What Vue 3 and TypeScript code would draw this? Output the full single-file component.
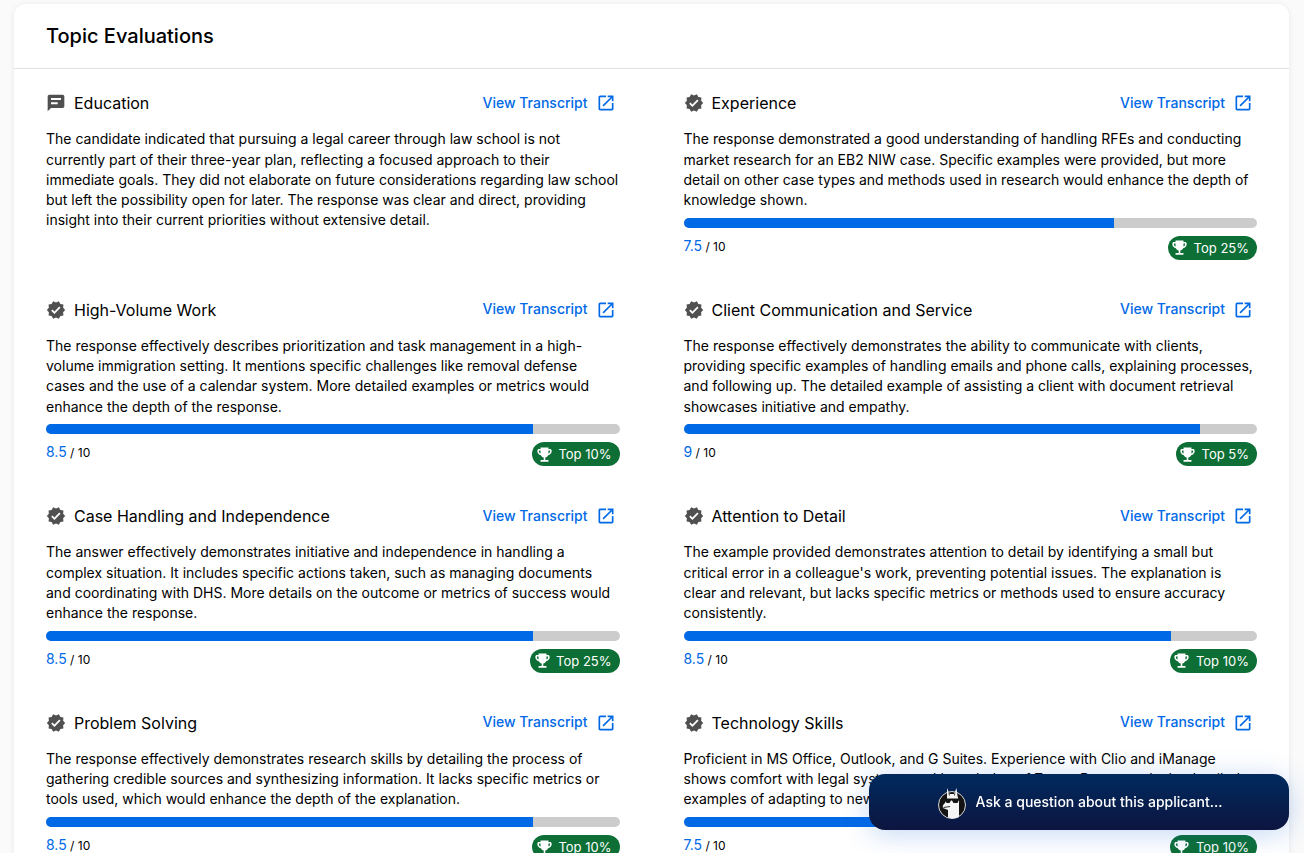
<template>
  <div class="page">
    <section class="panel">
      <h2 class="panel-title">Topic Evaluations</h2>
      <div class="topics">
        <article v-for="topic in topics" :key="topic.name" class="topic">
          <header class="topic-head">
            <svg class="topic-icon" viewBox="0 0 24 24" aria-hidden="true">
              <path :d="topic.score === null ? chatPath : verifiedPath" />
            </svg>
            <h3 class="topic-name">{{ topic.name }}</h3>
            <a class="transcript" href="#">
              <span class="transcript-label">View Transcript</span>
              <svg viewBox="0 0 24 24" aria-hidden="true"><path :d="openPath" /></svg>
            </a>
          </header>
          <p class="summary">{{ topic.text }}</p>
          <template v-if="topic.score !== null">
            <div class="bar">
              <div class="bar-fill" :style="{ width: topic.fill + '%' }"></div>
            </div>
            <div class="score-row">
              <span class="score"><b>{{ topic.score }}</b> / 10</span>
              <span class="rank">
                <svg viewBox="0 0 24 24" aria-hidden="true"><path :d="trophyPath" /></svg>
                {{ topic.rank }}
              </span>
            </div>
          </template>
        </article>
      </div>
    </section>

    <!-- floating assistant bar -->
    <button class="ask" type="button">
      <svg class="llama" viewBox="0 0 28 32" aria-hidden="true">
        <circle cx="14" cy="18" r="13.500" fill="#141414" stroke="#d8d8d8" stroke-width="1" />
        <path
          fill="#f4f4f4"
          d="M9 1l2.500 6H16l2.500-6 1 8 1.500 5v16q-5 2.500-11 .5V23l-5-2q-1-3 2-5l2-4z"
        />
        <path fill="#141414" d="M10.200 4.500l1.800 4h-1zM17.300 4.500l-1.300 4h1z" />
        <path fill="#141414" d="M7 11.500h14V13l-1.500 3h-4L14 13.500h-1L11.500 16H8.500z" />
        <path fill="none" stroke="#141414" stroke-width="0.9" d="M5.500 20.500l6.500-1" />
      </svg>
      Ask a question about this applicant...
    </button>
  </div>
</template>

<script setup lang="ts">
interface Topic {
  name: string
  text: string
  score: number | null
  fill?: number
  rank?: string
}

const chatPath =
  'M20 2H4c-1.100 0-1.990.9-1.990 2L2 22l4-4h14c1.100 0 2-.9 2-2V4c0-1.100-.9-2-2-2zM6 6h12v2.500H6V6zm0 5h8v2.500H6V11z'
const verifiedPath =
  'M23 12l-2.440-2.790.34-3.690-3.610-.82-1.890-3.200L12 2.960 8.600 1.500 6.710 4.690 3.100 5.500l.34 3.700L1 12l2.440 2.790-.34 3.700 3.610.82L8.600 22.500l3.400-1.470 3.400 1.460 1.890-3.190 3.610-.82-.34-3.690L23 12zm-12.910 4.720l-3.800-3.810 1.480-1.480 2.320 2.330 5.850-5.870 1.480 1.480-7.330 7.350z'
const openPath =
  'M19 19H5V5h7V3H5c-1.110 0-2 .9-2 2v14c0 1.100.89 2 2 2h14c1.100 0 2-.9 2-2v-7h-2v7zM14 3v2h3.590l-9.830 9.830 1.410 1.410L19 6.410V10h2V3h-7z'
const trophyPath =
  'M19 5h-2V3H7v2H5c-1.100 0-2 .9-2 2v1c0 2.550 1.920 4.630 4.390 4.940.63 1.500 1.980 2.630 3.610 2.960V19H7v2h10v-2h-4v-3.100c1.630-.33 2.980-1.460 3.610-2.960C19.080 12.630 21 10.550 21 8V7c0-1.100-.9-2-2-2zM5 8V7h2v3.820C5.840 10.400 5 9.300 5 8zm14 0c0 1.300-.84 2.400-2 2.820V7h2v1z'

const topics: Topic[] = [
  {
    name: 'Education',
    text: 'The candidate indicated that pursuing a legal career through law school is not currently part of their three-year plan, reflecting a focused approach to their immediate goals. They did not elaborate on future considerations regarding law school but left the possibility open for later. The response was clear and direct, providing insight into their current priorities without extensive detail.',
    score: null,
  },
  {
    name: 'Experience',
    text: 'The response demonstrated a good understanding of handling RFEs and conducting market research for an EB2 NIW case. Specific examples were provided, but more detail on other case types and methods used in research would enhance the depth of knowledge shown.',
    score: 7.5,
    fill: 75,
    rank: 'Top 25%',
  },
  {
    name: 'High-Volume Work',
    text: 'The response effectively describes prioritization and task management in a high-volume immigration setting. It mentions specific challenges like removal defense cases and the use of a calendar system. More detailed examples or metrics would enhance the depth of the response.',
    score: 8.5,
    fill: 85,
    rank: 'Top 10%',
  },
  {
    name: 'Client Communication and Service',
    text: 'The response effectively demonstrates the ability to communicate with clients, providing specific examples of handling emails and phone calls, explaining processes, and following up. The detailed example of assisting a client with document retrieval showcases initiative and empathy.',
    score: 9,
    fill: 90,
    rank: 'Top 5%',
  },
  {
    name: 'Case Handling and Independence',
    text: 'The answer effectively demonstrates initiative and independence in handling a complex situation. It includes specific actions taken, such as managing documents and coordinating with DHS. More details on the outcome or metrics of success would enhance the response.',
    score: 8.5,
    fill: 85,
    rank: 'Top 25%',
  },
  {
    name: 'Attention to Detail',
    text: "The example provided demonstrates attention to detail by identifying a small but critical error in a colleague's work, preventing potential issues. The explanation is clear and relevant, but lacks specific metrics or methods used to ensure accuracy consistently.",
    score: 8.5,
    fill: 85,
    rank: 'Top 10%',
  },
  {
    name: 'Problem Solving',
    text: 'The response effectively demonstrates research skills by detailing the process of gathering credible sources and synthesizing information. It lacks specific metrics or tools used, which would enhance the depth of the explanation.',
    score: 8.5,
    fill: 85,
    rank: 'Top 10%',
  },
  {
    name: 'Technology Skills',
    text: 'Proficient in MS Office, Outlook, and G Suites. Experience with Clio and iManage shows comfort with legal systems and knowledge of Zoom. Response lacks detailed examples of adapting to new tools or troubleshooting.',
    score: 7.5,
    fill: 75,
    rank: 'Top 10%',
  },
]
</script>

<style>
html,
body {
  margin: 0;
  height: 100%;
  overflow: hidden;
  background: #fafafa;
}
</style>

<style scoped>
.page {
  height: 853px;
  overflow: hidden;
  box-sizing: border-box;
  padding: 4px 15px 0 14px;
  font-family: Inter, "Liberation Sans", sans-serif;
  color: #000;
}

.panel {
  background: #fff;
  border-radius: 12px;
  box-shadow: 0 1px 6px rgba(0, 0, 0, 0.08);
}

.panel-title {
  margin: 0;
  padding: 18px 32px;
  border-bottom: 1px solid #e0e0e0;
  font-size: 20px;
  line-height: 28px;
  font-weight: 500;
}

.topics {
  display: grid;
  grid-template-columns: 1fr 1fr;
  grid-auto-rows: 206.5px;
  column-gap: 64px;
  padding: 22.300px 32px 0;
}

.topic-head {
  display: flex;
  align-items: center;
  height: 24px;
  margin-bottom: 14px;
}

.topic-icon {
  width: 20px;
  height: 20px;
  fill: #505050;
  fill-rule: evenodd;
  margin-right: 8px;
}

.topic-name {
  margin: 0;
  font-size: 16px;
  font-weight: 400;
  line-height: 24px;
}

.transcript {
  display: flex;
  align-items: center;
  gap: 8px;
  margin-left: auto;
  margin-right: 4px;
  color: #0069e6;
  font-size: 14px;
  font-weight: 500;
  text-decoration: none;
}

.transcript-label {
  margin-bottom: 2px;
}

.transcript svg {
  width: 20px;
  height: 20px;
  fill: #0069e6;
}

.summary {
  margin: 0;
  font-size: 14px;
  line-height: 20.25px;
}

.bar {
  height: 10px;
  margin-top: 7.600px;
  border-radius: 5px;
  background: #cccccc;
  overflow: hidden;
}

.bar-fill {
  height: 100%;
  background: #0069e6;
}

.score-row {
  display: flex;
  justify-content: space-between;
  align-items: flex-start;
  margin-top: 8px;
}

.score {
  font-size: 12px;
  line-height: 20px;
}

.score b {
  font-size: 14px;
  font-weight: 400;
  color: #0069e6;
}

.rank {
  display: flex;
  align-items: center;
  gap: 4.500px;
  height: 24px;
  padding: 0 8px 0 2.500px;
  border-radius: 12px;
  background: #0e6f36;
  color: #fff;
  font-size: 13px;
}

.rank svg {
  width: 19px;
  height: 19px;
  fill: #fff;
}

.ask {
  position: fixed;
  left: 869px;
  top: 774px;
  width: 420px;
  height: 56px;
  padding: 0 0 2px 2px;
  display: flex;
  align-items: center;
  justify-content: center;
  gap: 10px;
  border: 0;
  border-radius: 16px;
  background: linear-gradient(180deg, #002a5e, #0d1540);
  box-shadow: 0 4px 28px rgba(0, 90, 210, 0.24);
  color: #fff;
  font-family: Inter, "Liberation Sans", sans-serif;
  font-size: 14px;
  font-weight: 500;
}

.llama {
  width: 28px;
  height: 32px;
  margin-top: 4px;
}
</style>
